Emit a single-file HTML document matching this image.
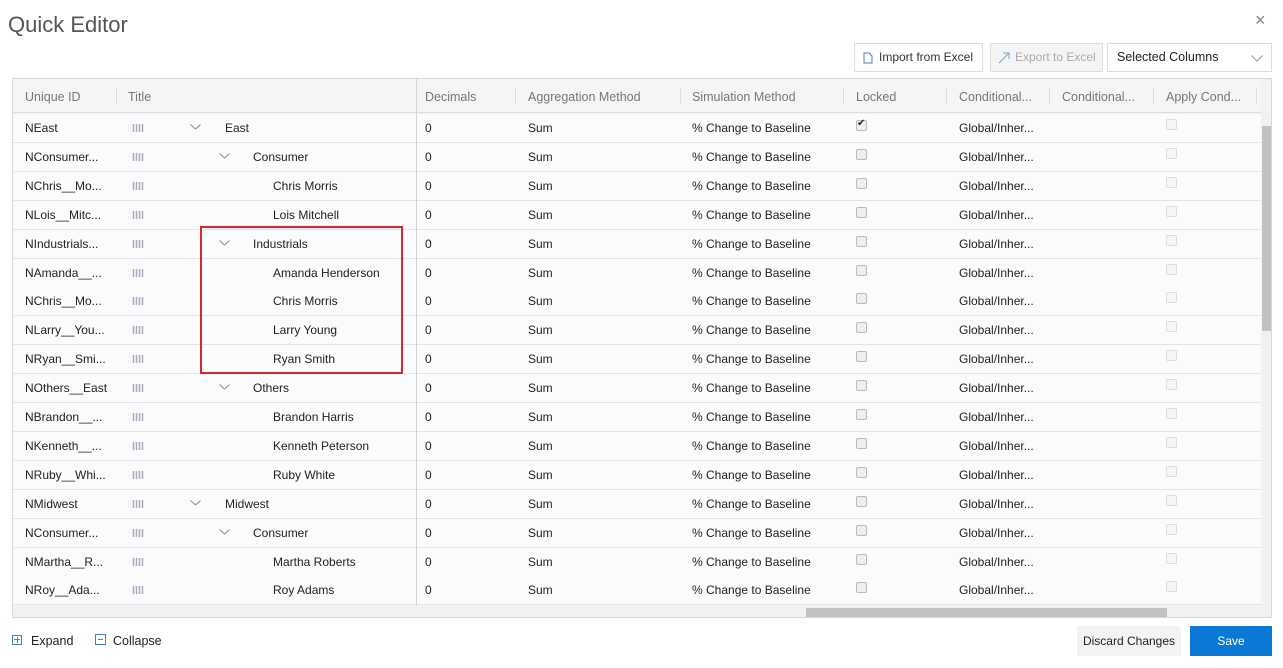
<!DOCTYPE html><html><head><style>
*{margin:0;padding:0;box-sizing:border-box}
body{width:1283px;height:668px;background:#fff;font-family:"Liberation Sans",sans-serif;font-size:12px;color:#222;position:relative;overflow:hidden}
.a{position:absolute;white-space:nowrap}
.grid{position:absolute;left:12px;top:78px;width:1260px;height:540px;border:1px solid #d8d8d8;overflow:hidden;background:#f3f3f3}
.hdr{position:absolute;left:0;top:0;width:1248px;height:34px;background:#f4f5f5;border-bottom:1px solid #ddd;color:#777;font-size:12.5px}
.row{position:absolute;left:0;width:1248px;height:29px;background:#fafbfd;border-bottom:1px solid #e4e4e4}
.cb{position:absolute;width:11px;height:11px;border:1px solid #bbb;border-radius:2px;background:#eee}
.cb2{border-color:#ddd;background:#f6f6f6}
.sep{position:absolute;top:9px;width:1px;height:16px;background:#ddd}
.btn{position:absolute;top:43px;height:29px;border:1px solid #ddd;font-size:12px;line-height:27px}
.grip{position:absolute;left:119px;top:10px;width:12px;height:8px;background-image:radial-gradient(circle,#aab 0.8px,transparent 1px);background-size:3px 2px}
</style></head><body>
<div class="a" style="left:8px;top:12px;font-size:22px;color:#555">Quick Editor</div>
<div class="a" style="left:1255px;top:10px;font-size:18px;color:#888">×</div>
<div class="btn" style="left:854px;width:129px;color:#333"><svg class="a" style="left:8px;top:8px" width="10" height="12"><path d="M1 1h5l3 3v7H1z" fill="none" stroke="#4a7fc1"/></svg><span style="position:absolute;left:24px">Import from Excel</span></div>
<div class="btn" style="left:990px;width:113px;background:#f4f4f4;color:#aaa"><svg class="a" style="left:7px;top:8px" width="12" height="12"><path d="M1 11L11 1M5 1h6v6" fill="none" stroke="#7aa3d6"/></svg><span style="position:absolute;left:24px">Export to Excel</span></div>
<div class="btn" style="left:1107px;width:165px;color:#222;font-size:12.5px"><span style="position:absolute;left:9px">Selected Columns</span><svg class="a" style="right:8px;top:11px" width="12" height="7"><path d="M0.5 0.5L6 6L11.5 0.5" fill="none" stroke="#999"/></svg></div>
<div class="grid">
<div class="hdr">
<span class="a" style="left:12px;top:11px">Unique ID</span><div class="sep" style="left:103px"></div>
<span class="a" style="left:115px;top:11px">Title</span>
<span class="a" style="left:412px;top:11px">Decimals</span><div class="sep" style="left:502px"></div>
<span class="a" style="left:515px;top:11px">Aggregation Method</span><div class="sep" style="left:667px"></div>
<span class="a" style="left:679px;top:11px">Simulation Method</span><div class="sep" style="left:830px"></div>
<span class="a" style="left:843px;top:11px">Locked</span><div class="sep" style="left:933px"></div>
<span class="a" style="left:946px;top:11px">Conditional...</span><div class="sep" style="left:1036px"></div>
<span class="a" style="left:1049px;top:11px">Conditional...</span><div class="sep" style="left:1140px"></div>
<span class="a" style="left:1153px;top:11px">Apply Cond...</span><div class="sep" style="left:1243px"></div>
</div>
<div id="rows"></div>
<div style="position:absolute;left:403px;top:0;width:1px;height:540px;background:#d4d4d4"></div>
<div style="position:absolute;left:0;top:527px;width:1248px;height:12px;background:#f1f1f1"></div>
<div style="position:absolute;left:793px;top:529px;width:361px;height:9px;background:#c2c2c2"></div>
<div style="position:absolute;left:1248px;top:34px;width:11px;height:506px;background:#f1f1f1"></div>
<div style="position:absolute;left:1249px;top:47px;width:9px;height:205px;background:#c2c2c2"></div>
</div>
<div style="position:absolute;left:200px;top:226px;width:203px;height:148px;border:2px solid #d9262b"></div>
<div class="a" style="left:12px;top:635px;width:10px;height:10px;border:1px solid #4a7fc1"></div>
<div class="a" style="left:14px;top:639px;width:6px;height:1px;background:#4a7fc1"></div>
<div class="a" style="left:16.5px;top:637px;width:1px;height:6px;background:#4a7fc1"></div>
<div class="a" style="left:31px;top:634px;font-size:12.5px">Expand</div>
<div class="a" style="left:95px;top:634px;width:11px;height:11px;border:1px solid #4a7fc1;"></div>
<div class="a" style="left:98px;top:639px;width:5px;height:1px;background:#4a7fc1"></div>
<div class="a" style="left:113px;top:634px;font-size:12.5px">Collapse</div>
<div class="a" style="left:1077px;top:626px;width:104px;height:30px;background:#f3f3f3;text-align:center;line-height:30px;font-size:12px">Discard Changes</div>
<div class="a" style="left:1190px;top:626px;width:82px;height:30px;background:#0a78d4;color:#fff;text-align:center;line-height:30px;font-size:12px">Save</div>
<script>
var d=[["NEast","East",0,1],["NConsumer...","Consumer",1],["NChris__Mo...","Chris Morris",2],["NLois__Mitc...","Lois Mitchell",2],["NIndustrials...","Industrials",1],["NAmanda__...","Amanda Henderson",2],["NChris__Mo...","Chris Morris",2],["NLarry__You...","Larry Young",2],["NRyan__Smi...","Ryan Smith",2],["NOthers__East","Others",1],["NBrandon__...","Brandon Harris",2],["NKenneth__...","Kenneth Peterson",2],["NRuby__Whi...","Ruby White",2],["NMidwest","Midwest",0],["NConsumer...","Consumer",1],["NMartha__R...","Martha Roberts",2],["NRoy__Ada...","Roy Adams",2]];
var h="";d.forEach(function(r,i){var t=35+i*28.9;var tx=[212,240,260][r[2]];
h+='<div class="row" style="top:'+t+'px"><span class="a" style="left:12px;top:7px">'+r[0]+'</span><div class="grip"></div>'+(r[2]<2?'<svg class="a" style="left:'+(r[2]?206:177)+'px;top:10px" width="11" height="6"><path d="M0.5 0.5L5.5 5L10.5 0.5" fill="none" stroke="#888"/></svg>':'')+'<span class="a" style="left:'+tx+'px;top:7px">'+r[1]+'</span><span class="a" style="left:412px;top:7px">0</span><span class="a" style="left:515px;top:7px">Sum</span><span class="a" style="left:679px;top:7px">% Change to Baseline</span><div class="cb" style="left:843px;top:6px">'+(r[3]?'<span style="position:absolute;left:0;top:-3px;font-size:10px">✔</span>':'')+'</div><span class="a" style="left:946px;top:7px">Global/Inher...</span><div class="cb cb2" style="left:1153px;top:5px"></div></div>';});
document.getElementById("rows").innerHTML=h;
</script>
</body></html>
